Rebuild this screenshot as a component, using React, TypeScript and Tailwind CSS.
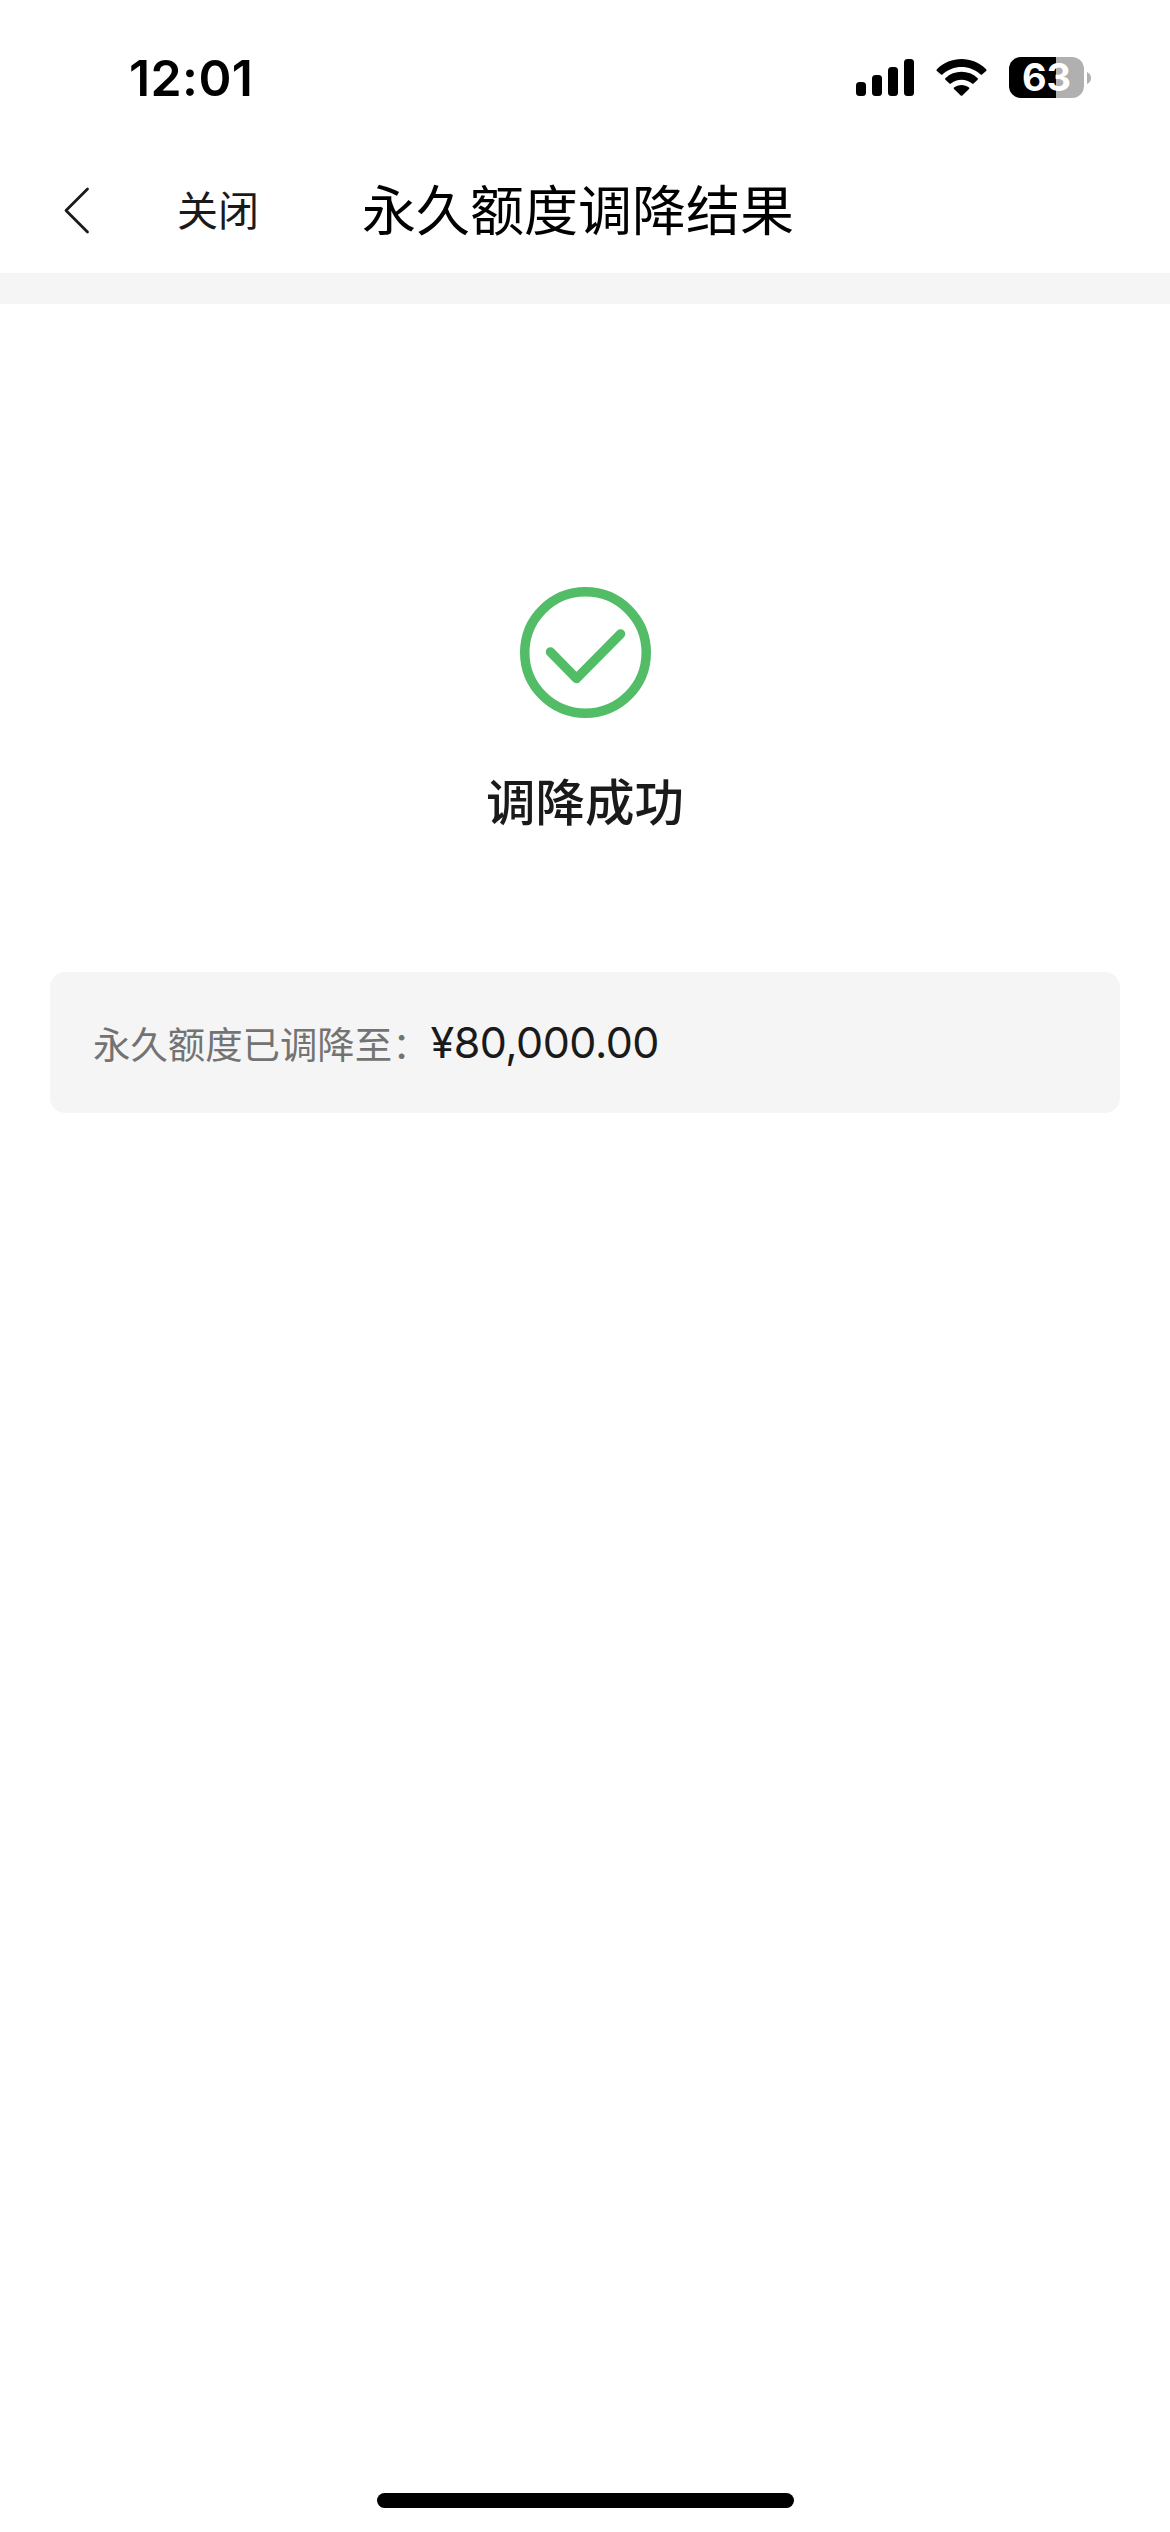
function StatusBar() {
  return (
    <div className="flex h-[144px] items-start pl-[129px] pr-[79px] text-black">
      <div className="mt-[48px] font-['Inter'] text-[50px] font-semibold leading-[60px] tracking-[0.4px]">12:01</div>
      <div className="ml-auto mt-[57px] flex items-start">
        <svg className="mt-[2px] h-[37px] w-[58px]" viewBox="0 0 58 37" fill="currentColor">
          <rect x="0" y="23" width="10" height="14" rx="3.5" />
          <rect x="16" y="16" width="10" height="21" rx="3.5" />
          <rect x="32" y="8" width="10" height="29" rx="3.5" />
          <rect x="48" y="0" width="10" height="37" rx="3.5" />
        </svg>
        <svg className="ml-[22px] mt-[2px] h-[37px] w-[51px]" viewBox="0 0 51 37" fill="currentColor">
          <path d="M0.9 10.3C14.4-3.4 36.6-3.4 50.1 10.3Q50.9 11.2 50.1 12L46 15.4Q45.3 16 44.6 15.4C34 5.4 17 5.4 6.4 15.4Q5.7 16 5 15.4L0.9 12Q0.1 11.2 0.9 10.3Z" />
          <path d="M9.3 19.2C18.4 10.7 32.6 10.7 41.7 19.2Q42.3 19.9 41.6 20.7L37.6 24.6Q36.9 25.2 36.2 24.6C30.2 19.3 20.8 19.3 14.8 24.6Q14.1 25.2 13.4 24.6L9.4 20.7Q8.7 19.9 9.3 19.2Z" />
          <path d="M18 28.6C22.3 25 28.7 25 33 28.6Q33.7 29.3 33 30L26.3 36.4Q25.5 37.1 24.7 36.4L18 30Q17.3 29.3 18 28.6Z" />
        </svg>
        <div className="ml-[22px] flex items-center">
          <div className="flex h-[41px] w-[75px] items-center justify-center rounded-[12px] bg-[linear-gradient(to_right,#000_47px,#b0b0b0_47px)] font-['Inter'] text-[38px] font-bold leading-[41px] text-white">
            63
          </div>
          <svg className="ml-[3px] h-[12px] w-[4px]" viewBox="0 0 4 12" fill="#b0b0b0">
            <path d="M0 0Q4 2 4 6Q4 10 0 12Z" />
          </svg>
        </div>
      </div>
    </div>
  );
}

function NavBar() {
  return (
    <header className="flex h-[129px] items-start pl-[64px]">
      <svg className="mt-[43px] h-[47px] w-[26px]" viewBox="0 0 26 47" fill="none" stroke="#1a1a1a" strokeWidth="2.8" strokeLinecap="round" strokeLinejoin="round">
        <path d="M23.5 2L2 23.5L23.5 45" />
      </svg>
      <button className="ml-[87px] mt-[34px] text-[41px] leading-[60px] text-[#1a1a1a]">关闭</button>
      <h1 className="ml-[103px] mt-[24px] text-[54px] leading-[80px] text-black">永久额度调降结果</h1>
    </header>
  );
}

export default function App() {
  return (
    <div className="flex h-[2532px] w-[1170px] flex-col overflow-hidden bg-white font-['Noto_Sans_CJK_SC',sans-serif]">
      <StatusBar />
      <NavBar />
      <div className="h-[31px] bg-[#f5f5f5]" />
      <main className="flex flex-col items-center">
        <svg className="mt-[283px] h-[131px] w-[131px]" viewBox="0 0 131 131" fill="none" stroke="#52bc66" strokeWidth="9.5" strokeLinecap="round" strokeLinejoin="round">
          <circle cx="65.5" cy="65.5" r="60.75" />
          <path d="M30.5 65L56.5 91.5L100.5 47" />
        </svg>
        <h2 className="mt-[46px] text-[49.5px] font-medium leading-[72px] text-[#1a1a1a]">调降成功</h2>
        <section className="mt-[136px] flex h-[141px] w-[1070px] items-start rounded-[15px] bg-[#f5f5f5] pl-[43px]">
          <span className="mt-[44px] text-[37.4px] leading-[54px] text-[#737373]">永久额度已调降至：</span>
          <span className="ml-px mt-[44px] whitespace-nowrap font-['Inter'] text-[43px] leading-[52px] tracking-[-0.5px] text-[#1a1a1a]">¥80,000.00</span>
        </section>
      </main>
      <div className="mx-auto mb-[24px] mt-auto h-[15px] w-[417px] rounded-full bg-black" />
    </div>
  );
}
